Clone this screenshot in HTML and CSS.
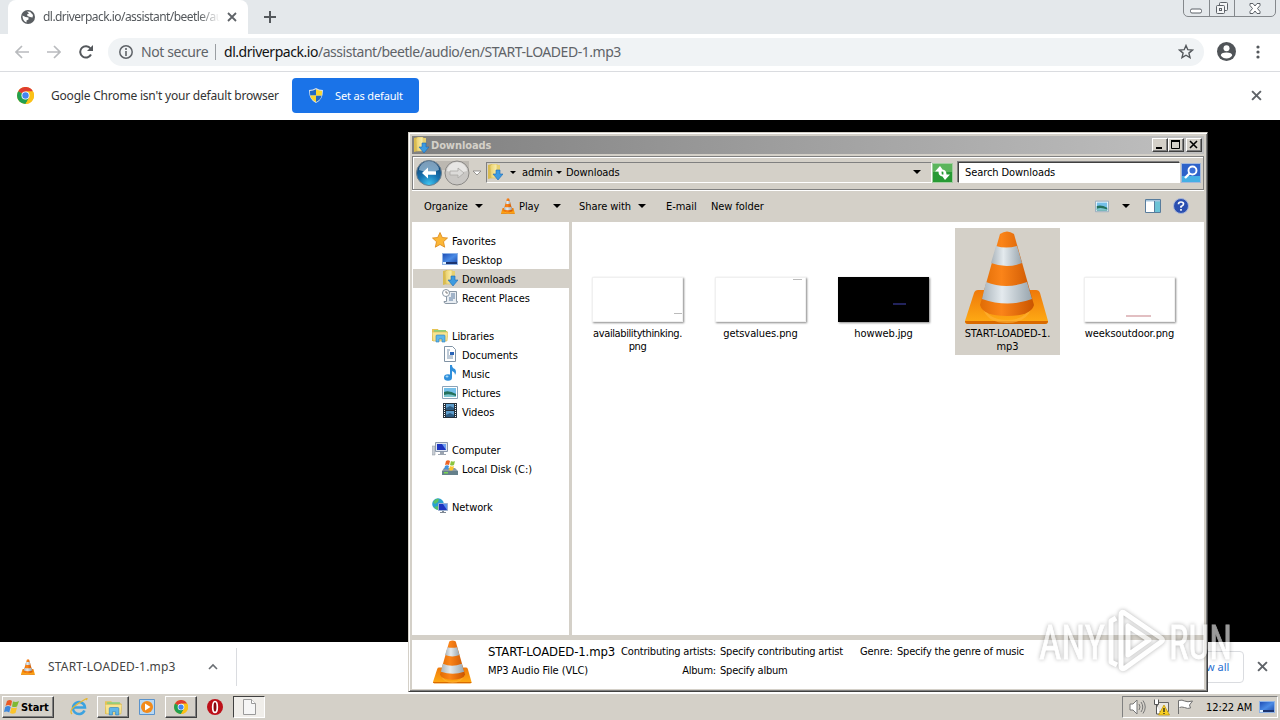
FILE: index.html
```html
<!DOCTYPE html>
<html lang="en">
<head>
    <meta charset="UTF-8">
    <meta name="viewport" content="width=device-width, initial-scale=1.0">
    <title>Desktop</title>
    <link rel="stylesheet" href="styles.css">
</head>
<body>
    <!-- Shared icons -->
    <svg width="0" height="0" class="defs">
        <defs>
            <linearGradient id="coneOrange">
                <stop offset="0" stop-color="#e06c05"/>
                <stop offset="0.4" stop-color="#fb8419"/>
                <stop offset="1" stop-color="#c95400"/>
            </linearGradient>
            <linearGradient id="coneWhite">
                <stop offset="0" stop-color="#a9b3ba"/>
                <stop offset="0.4" stop-color="#e4eaee"/>
                <stop offset="1" stop-color="#98a5ae"/>
            </linearGradient>
            <linearGradient id="coneBase" x2="0" y2="1">
                <stop offset="0" stop-color="#ee780a"/>
                <stop offset="1" stop-color="#ffad14"/>
            </linearGradient>
            <linearGradient id="blueScreen" x2="1" y2="1">
                <stop offset="0" stop-color="#1f4fb6"/>
                <stop offset="0.5" stop-color="#4a8be6"/>
                <stop offset="1" stop-color="#1d48a8"/>
            </linearGradient>
            <linearGradient id="folderYellow" x2="1" y2="0">
                <stop offset="0" stop-color="#e9cf6b"/>
                <stop offset="1" stop-color="#fbf0b0"/>
            </linearGradient>
            <radialGradient id="backBlue" cx="0.5" cy="0.95" r="0.9">
                <stop offset="0" stop-color="#3ec4f0"/>
                <stop offset="0.5" stop-color="#1670ae"/>
                <stop offset="1" stop-color="#14406c"/>
            </radialGradient>
        </defs>
        <symbol id="cone" viewBox="0 0 84 94">
            <path d="M13 59h58q3 0 4 3l8 28q0 3-3 3H3q-3 0-3-3l9-28q1-3 4-3z" fill="url(#coneBase)"/>
            <path d="M0 90q0 3 3 3h77q3 0 3-3z" fill="#d96a00"/>
            <path d="M18 73q4 16 24 16t24-16v5q-5 14-24 14T18 78z" fill="#ffb43a" opacity=".6"/>
            <path d="M35 3q7-5 14 0l20 71q-3 11-27 11T15 74z" fill="url(#coneOrange)"/>
            <path d="M31 15q10 3 21 0l5 17q-15 6-31 0z" fill="url(#coneWhite)"/>
            <path d="M21 51q20 8 41 0l5 17q-24 9-50 0z" fill="url(#coneWhite)"/>
        </symbol>
        <symbol id="downloads" viewBox="0 0 16 16">
            <path d="M1 1l4-1v14l-4 1z" fill="#d9bb50"/>
            <path d="M3 2l2-2h5v14H4z" fill="url(#folderYellow)" stroke="#d8be5c" stroke-width=".6"/>
            <path d="M10 1h3v12h-3z" fill="#e8d070"/>
            <path d="M9 6h4v4h3l-5 6-5-6h3z" fill="#3d9be0" stroke="#1b69b5" stroke-width=".6"/>
        </symbol>
        <symbol id="monitor" viewBox="0 0 16 16">
            <path d="M0 2h16v12H0z" fill="#8fb3e6"/>
            <path d="M1 3h14v10H1z" fill="url(#blueScreen)"/>
            <path d="M1 11h14v2H1z" fill="#1b3470"/>
            <path d="M1 11h3v2H1z" fill="#dff0ff"/>
        </symbol>
        <symbol id="libraries" viewBox="0 0 16 16">
            <path d="M0 2h6l1 2h8v10H0z" fill="#e5c454"/>
            <path d="M2 3h12v4H2z" fill="#8fcf7a"/>
            <path d="M0 5h16l-1 9H1z" fill="#f8e490" stroke="#d6b550" stroke-width=".6"/>
            <path d="M4 15V9q0-1 1-1h7q1 0 1 1v6h-3v-3H7v3z" fill="#5fb6e8" stroke="#2c80bd" stroke-width=".6"/>
        </symbol>
        <symbol id="picture" viewBox="0 0 16 16">
            <path d="M.5 2.500h15v12H.5z" fill="#fff" stroke="#8ba3b8"/>
            <path d="M2 4h12v9H2z" fill="#73bfe9"/>
            <path d="M2 8q5-2 12 2v3H2z" fill="#23705b"/>
            <path d="M2 11q5-2 12 1v1H2z" fill="#7bc4ce"/>
        </symbol>
        <symbol id="chrome" viewBox="0 0 16 16">
            <circle cx="8" cy="8" r="8" fill="#fbc116"/>
            <path d="M8 8L1.100 4A8 8 0 0 1 15 4H8z" fill="#df3d30"/>
            <path d="M8 8L1.100 4A8 8 0 0 0 8 16l3.500-6z" fill="#21a050"/>
            <path d="M8 8L15 4a8 8 0 0 1-7 12l3.500-6z" fill="#fbc116"/>
            <circle cx="8" cy="8" r="3.800" fill="#fff"/>
            <circle cx="8" cy="8" r="3" fill="#4385f0"/>
        </symbol>
        <symbol id="close" viewBox="0 0 10 10">
            <path d="M1 1l8 8M9 1L1 9" stroke="#5f6368" stroke-width="1.800"/>
        </symbol>
        <symbol id="arrow" viewBox="0 0 8 4">
            <path d="M0 0h8L4 4z"/>
        </symbol>
    </svg>

    <div class="browser">
        <div class="tabstrip">
            <div class="tab">
                <svg class="globe" width="14" height="14" viewBox="0 0 14 14">
                    <circle cx="7" cy="7" r="7" fill="#5a5e62"/>
                    <path d="M1.500 5.500l3 1.500 3 .5v2l-2 1v2Q1.500 11 1.500 5.500zM6 1.500l3 .2 3 3.300-.5 2.500L9 7 6.500 6 6 4.500 8 3.500z" fill="#fff"/>
                </svg>
                <span class="tab-title">dl.driverpack.io/assistant/beetle/audio</span>
                <svg width="10" height="10"><use href="#close"/></svg>
            </div>
            <svg class="new-tab" width="12" height="12" viewBox="0 0 12 12"><path d="M6 0v12M0 6h12" stroke="#54585c" stroke-width="2"/></svg>
            <div class="caption">
                <span><svg width="13" height="6" viewBox="0 0 13 6"><rect x=".5" y="1" width="11" height="4" rx="1.500" fill="#fff" stroke="#5d6268"/></svg></span>
                <span><svg width="14" height="14" viewBox="0 0 14 14" fill="#f4f5f6" stroke="#5d6268"><rect x="4.500" y="1.500" width="8" height="8" rx="1"/><rect x="1.500" y="4.500" width="8" height="8" rx="1"/><rect x="4.500" y="7.500" width="2" height="2"/></svg></span>
                <span><svg width="12" height="11" viewBox="0 0 12 11"><path d="M1 .5h3l2 2.500 2-2.500h3v2L8.500 5.500 11 8.500v2H8L6 8l-2 2.500H1v-2l2.500-3L1 2.500z" fill="#fff" stroke="#5d6268"/></svg></span>
            </div>
        </div>

        <div class="toolbar">
            <svg width="14" height="14" viewBox="0 0 14 14" fill="none" stroke="#b9bbbe" stroke-width="1.700"><path d="M14 7H1M7 1L1 7l6 6"/></svg>
            <svg width="14" height="14" viewBox="0 0 14 14" fill="none" stroke="#b9bbbe" stroke-width="1.700"><path d="M0 7h13M7 1l6 6-6 6"/></svg>
            <svg width="14" height="14" viewBox="0 0 14 14"><path d="M12 9.500A5.700 5.700 0 1 1 11.500 3.500" fill="none" stroke="#54585c" stroke-width="2"/><path d="M14 0v6H8z" fill="#54585c"/></svg>
            <div class="omnibox">
                <svg width="14" height="14" viewBox="0 0 14 14"><circle cx="7" cy="7" r="6.200" fill="none" stroke="#5f6368" stroke-width="1.500"/><path d="M7 3v2M7 6v5" stroke="#5f6368" stroke-width="1.600"/></svg>
                <span class="secure">Not secure</span>
                <span class="separator"></span>
                <span class="url"><b>dl.driverpack.io</b><span>/assistant/beetle/audio/en/START-LOADED-1.mp3</span></span>
                <svg class="star" width="16" height="15" viewBox="0 0 16 15"><path d="M8 1.500l1.800 4.200 4.600.4-3.500 3 1.100 4.500L8 11.200l-4 2.400 1.100-4.500-3.500-3 4.600-.4z" fill="none" stroke="#54585c" stroke-width="1.400"/></svg>
            </div>
            <svg class="avatar" width="19" height="19" viewBox="0 0 19 19"><circle cx="9.500" cy="9.500" r="9.500" fill="#505458"/><circle cx="9.500" cy="6.300" r="3" fill="#fff"/><path d="M3.800 13.500q0-3 5.700-3t5.700 3q-2 3-5.700 3t-5.700-3z" fill="#fff"/></svg>
            <svg class="more" width="4" height="14" viewBox="0 0 4 14" fill="#54585c"><circle cx="2" cy="2" r="1.600"/><circle cx="2" cy="7" r="1.600"/><circle cx="2" cy="12" r="1.600"/></svg>
        </div>

        <div class="infobar">
            <svg width="17" height="17"><use href="#chrome"/></svg>
            <span class="info-text">Google Chrome isn't your default browser</span>
            <button class="default-button">
                <svg width="14" height="15" viewBox="0 0 14 15"><path d="M7 0q3 2 7 2 0 10-7 13Q0 12 0 2q4 0 7-2z" fill="#d9e2ea"/><path d="M7 1.300V7.500H1.200Q1 5 1 3q3 0 6-1.700zM7 7.500h5.700Q11.500 12 7 14z" fill="#1f69c4"/><path d="M7 1.300Q10 3 13 3q0 2-.3 4.500H7zM1.200 7.500H7V14Q2.500 12 1.200 7.500z" fill="#f8d62f"/></svg>
                <span>Set as default</span>
            </button>
            <svg class="info-close" width="11" height="11"><use href="#close"/></svg>
        </div>

        <div class="page"></div>

        <div class="shelf">
            <svg width="14" height="16"><use href="#cone"/></svg>
            <span class="shelf-name">START-LOADED-1.mp3</span>
            <svg width="10" height="7" viewBox="0 0 10 7"><path d="M1 6l4-4 4 4" fill="none" stroke="#6a6e73" stroke-width="1.600"/></svg>
            <span class="shelf-line"></span>
            <button class="show-all">Show all</button>
            <svg width="11" height="11"><use href="#close"/></svg>
        </div>
    </div>

    <div class="taskbar">
        <button class="start">
            <svg width="16" height="16" viewBox="0 0 16 16"><path d="M3 2q3-2 5 0L7 7Q4 5 1.500 7z" fill="#ea5a26"/><path d="M9 2.500q3 1 6-.5l-2 5.500q-3 1-5 0z" fill="#7fb935"/><path d="M1.200 8q3-2 5.500 0l-1.500 5.500Q3 12 0 13z" fill="#3f88dc"/><path d="M7.500 8.500q3 1 5.500 0L11.500 14q-3 1.500-5.500 0z" fill="#fbc42b"/></svg>
            <span>Start</span>
        </button>
        <span class="task ie"><svg width="18" height="18" viewBox="0 0 18 18"><path d="M14.500 12.500A6 6 0 1 1 15 9.500H4" fill="none" stroke="#3ba2e0" stroke-width="2.500"/><path d="M2 16Q-2 12 9 5t7-3" fill="none" stroke="#e6b733" stroke-width="1.300"/></svg></span>
        <span class="task raised"><svg width="17" height="17"><use href="#libraries"/></svg></span>
        <span class="task"><svg width="16" height="16" viewBox="0 0 16 16"><path d="M.5.500h15v15H.5z" fill="#b8d8f3" stroke="#5a93cc"/><circle cx="8" cy="8" r="6" fill="#f28a1a"/><path d="M6 4.500v7L11.500 8z" fill="#fff"/></svg></span>
        <span class="task raised"><svg width="14" height="14"><use href="#chrome"/></svg></span>
        <span class="task"><svg width="16" height="16" viewBox="0 0 16 16"><circle cx="8" cy="8" r="8" fill="#bd1019"/><ellipse cx="8" cy="8" rx="2.300" ry="5.500" fill="#8a0810" stroke="#fff" stroke-width="1.700"/></svg></span>
        <span class="task pressed"><svg width="13" height="16" viewBox="0 0 13 16"><path d="M.5.500h8l4 4v11H.5z" fill="#f6f6f6" stroke="#9a9a9a"/><path d="M8.500.500v4h4" fill="#fff" stroke="#9a9a9a"/></svg></span>
        <div class="tray">
            <svg width="17" height="16" viewBox="0 0 17 16"><path d="M1 5h3l4-4v14l-4-4H1z" fill="#fff" stroke="#777"/><path d="M10 5q2 3 0 6M12 3q3.500 5 0 10M14 1.500q4.500 6.500 0 13" fill="none" stroke="#777"/></svg>
            <svg width="17" height="17" viewBox="0 0 17 17"><path d="M4.500 3.500h11v9h-11z" fill="#e9e6df" stroke="#666"/><path d="M1.500.5v5h4v-5M3.500 5v10h4" fill="#fff" stroke="#555"/><path d="M11 6l5.500 10h-11z" fill="#f8cf23" stroke="#bb8f00" stroke-width=".7"/><path d="M11 9v4M11 14v1" stroke="#222" stroke-width="1.300"/></svg>
            <svg width="17" height="16" viewBox="0 0 17 16"><path d="M1.500 15V1.500q4-1 6 .5 3 1.500 8 0l-3 4 1 3q-3 1-6-.5-3-1-5 0" fill="#fff" stroke="#707070"/></svg>
            <span class="clock">12:22 AM</span>
            <svg width="16" height="16"><use href="#monitor"/></svg>
        </div>
    </div>

    <div class="window">
        <div class="titlebar">
            <svg width="16" height="16"><use href="#downloads"/></svg>
            <span class="window-title">Downloads</span>
            <span class="win-button"><svg width="14" height="12" viewBox="0 0 14 12"><path d="M3 8h6v2H3z"/></svg></span>
            <span class="win-button"><svg width="14" height="12" viewBox="0 0 14 12"><path d="M2.500 2v7.500h8V2z" fill="none" stroke="#000"/><path d="M2 1h9v2H2z"/></svg></span>
            <span class="win-button last"><svg width="14" height="12" viewBox="0 0 14 12"><path d="M3 2l7 7M10 2L3 9" stroke="#000" stroke-width="1.600"/></svg></span>
        </div>

        <div class="address-bar">
            <svg class="nav" width="66" height="26" viewBox="0 0 66 26">
                <path d="M13 1h40v9H13z" fill="#bcb8b1"/>
                <circle cx="13" cy="13" r="12.500" fill="url(#backBlue)" stroke="#6d7f8d"/>
                <path d="M3 10a10 9 0 0 1 20 0q-10 4-20 0z" fill="#a6c3d9" opacity=".7"/>
                <path d="M6 13l6-5.500v3.700h8v3.600h-8v3.700z" fill="#fff"/>
                <circle cx="41" cy="13" r="12" fill="#c9c7c4" stroke="#8b8986"/>
                <path d="M31 11a10 9 0 0 1 20 0q-10 3-20 0z" fill="#e7e6e4"/>
                <path d="M48 13l-6-5v3h-8v4h8v3z" fill="#dcdbd9" stroke="#aaa8a5" stroke-width=".8"/>
                <path d="M57 11h8l-4 4z" fill="#fff" stroke="#84817d" stroke-width=".8"/>
            </svg>
            <div class="path">
                <svg width="16" height="16"><use href="#downloads"/></svg>
                <svg class="crumb first" width="6" height="3"><use href="#arrow"/></svg>
                <span class="admin">admin</span>
                <svg class="crumb" width="6" height="3"><use href="#arrow"/></svg>
                <span class="crumb-name">Downloads</span>
                <svg class="path-menu" width="8" height="4"><use href="#arrow"/></svg>
            </div>
            <svg class="refresh" width="21" height="20" viewBox="0 0 21 20"><path d="M.5.500h20v19H.5z" fill="#279a34" stroke="#a3cfa1"/><path d="M1 1h19v8H1z" fill="#5cb55c"/><path d="M8 3L3 8.500h3.500q0 4.500 4 5-1-2-1-5H12zM13 17l5-5.500h-3.500q0-4.500-4-5 1 2 1 5H9z" fill="#fff"/></svg>
            <div class="search">Search Downloads</div>
            <svg class="search-go" width="20" height="20" viewBox="0 0 20 20"><path d="M.5.500h19v19H.5z" fill="#2d62c9" stroke="#a3b8db"/><path d="M1 13h18v6H1z" fill="#45afe4"/><circle cx="11.500" cy="7.500" r="4" fill="#3a6fd6" stroke="#fff" stroke-width="1.900"/><path d="M8.500 10.500L4 15" stroke="#fff" stroke-width="2.400"/></svg>
        </div>

        <div class="command-bar">
            <span class="organize">Organize</span>
            <svg class="drop" width="8" height="4"><use href="#arrow"/></svg>
            <svg class="play-icon" width="14" height="16"><use href="#cone"/></svg>
            <span class="play">Play</span>
            <svg class="drop play-drop" width="8" height="4"><use href="#arrow"/></svg>
            <span class="share">Share with</span>
            <svg class="drop" width="8" height="4"><use href="#arrow"/></svg>
            <span class="email">E-mail</span>
            <span class="new-folder">New folder</span>
            <svg class="view" width="14" height="14"><use href="#picture"/></svg>
            <svg class="view-drop" width="8" height="4"><use href="#arrow"/></svg>
            <svg class="pane" width="16" height="14" viewBox="0 0 16 14"><path d="M.5.500h15v13H.5z" fill="#fff" stroke="#587c9c"/><path d="M10 2h5v11h-5z" fill="#6cc3d6"/><path d="M1 1h14v1.500H1z" fill="#a6c5dc"/><path d="M9.500 2v11" stroke="#587c9c"/></svg>
            <svg width="16" height="16" viewBox="0 0 16 16"><circle cx="8" cy="8" r="7.500" fill="#2b4fb0" stroke="#a8b6d8"/><path d="M5.500 6.200Q5.500 4 8 4t2.500 2Q10.500 7.500 8 8.500v1.300M8 11v1.800" fill="none" stroke="#fff" stroke-width="1.700"/></svg>
        </div>

        <div class="explorer">
            <div class="sidebar">
                <div class="row">
                    <svg width="16" height="16" viewBox="0 0 16 16"><path d="M8 .5l2.300 5 5.200.5-4 3.700 1.200 5.500L8 12.500l-4.700 2.700 1.200-5.500L.5 6l5.200-.5z" fill="#fcb737" stroke="#d98718" stroke-width=".8"/></svg>
                    <span>Favorites</span>
                </div>
                <div class="row child"><svg width="16" height="16"><use href="#monitor"/></svg><span>Desktop</span></div>
                <div class="row child selected"><svg width="16" height="16"><use href="#downloads"/></svg><span>Downloads</span></div>
                <div class="row child">
                    <svg width="16" height="16" viewBox="0 0 16 16"><path d="M4.500 2.500h10v10h1q0 2-2 2H4q-2 0-2-2h2.500z" fill="#e9eef3" stroke="#8b98a5"/><path d="M9 5h4M9 7h4M7 9h6M7 11h4" stroke="#5a7ba0"/><circle cx="4" cy="4" r="3.500" fill="#fff" stroke="#8b98a5"/><path d="M4 2v2h2" fill="none" stroke="#666" stroke-width=".8"/></svg>
                    <span>Recent Places</span>
                </div>
                <div class="row gap"><svg width="16" height="16"><use href="#libraries"/></svg><span>Libraries</span></div>
                <div class="row child">
                    <svg width="16" height="16" viewBox="0 0 16 16"><path d="M2.500.500h8l3 3v12h-11z" fill="#fff" stroke="#8093a5"/><path d="M5 4h3M5 6h2M5 8h2M5 10h6M5 12h6" stroke="#7d96b0"/><path d="M8 6h4v3H8z" fill="#2b65b8"/></svg>
                    <span>Documents</span>
                </div>
                <div class="row child">
                    <svg width="16" height="16" viewBox="0 0 16 16"><path d="M8 0h2q0 3 3 4 2 3 0 6 0-3-3-4v6H8z" fill="#2f8fdb"/><ellipse cx="6" cy="12.500" rx="4" ry="3.300" fill="#2f8fdb"/><ellipse cx="5" cy="11.500" rx="1.500" ry="1" fill="#a5d8f8"/></svg>
                    <span>Music</span>
                </div>
                <div class="row child"><svg width="16" height="16"><use href="#picture"/></svg><span>Pictures</span></div>
                <div class="row child">
                    <svg width="16" height="16" viewBox="0 0 16 16"><path d="M1 0h14v15H1z" fill="#26323d"/><path d="M4 1h8v6H4zM4 8h8v6H4z" fill="#5d9dcc"/><path d="M4 5l4-2 4 2v2H4zM4 12l4-2 4 2v2H4z" fill="#2c5a80"/><path d="M2.500 1v14M13.500 1v14" stroke="#fff" stroke-dasharray="1 1"/></svg>
                    <span>Videos</span>
                </div>
                <div class="row gap">
                    <svg width="16" height="16" viewBox="0 0 16 16"><path d="M0 5h3v9H0z" fill="#c9ced5" stroke="#8e959d" stroke-width=".5"/><path d="M3.500 1.500h12v9h-12z" fill="#dfe6ef" stroke="#8b98ac"/><path d="M5 3h9v6H5z" fill="#1d34c0"/><path d="M10 3h4v6z" fill="#6fa0f0"/><path d="M6 13h8v1H6zM8 11h4v2H8z" fill="#9ba4b0"/></svg>
                    <span>Computer</span>
                </div>
                <div class="row child">
                    <svg width="16" height="16" viewBox="0 0 16 16"><path d="M2 8h11l3 3v4H0v-4z" fill="#8d9ba5"/><path d="M0 11h16v4H0z" fill="#65808b"/><path d="M2 12h4v1.500H2z" fill="#79d653"/><path d="M4 1q2-1.500 4 0L7 5Q5 4 3 5z" fill="#ec6424"/><path d="M9 1q2 1 4 0l-1 4q-2 1-4 0z" fill="#8bc53f"/><path d="M3 6q2-1.500 4 0L6 9.500q-2-1-4 0z" fill="#4393dc"/><path d="M8 6q2 1 4 0l-1 4q-2 1-4 0z" fill="#fcc42c"/></svg>
                    <span>Local Disk (C:)</span>
                </div>
                <div class="row gap">
                    <svg width="16" height="16" viewBox="0 0 16 16"><circle cx="6" cy="6" r="5.800" fill="#2a9fd0"/><path d="M1 4q3-4 6-3L6 4 3 6zM2 9l4-1 1 3-2 1z" fill="#58c264"/><path d="M6.500 5.500h9v7h-9z" fill="#1d34c0" stroke="#9cb0d0"/><path d="M11 6h4v6z" fill="#5b8fee"/><path d="M8 14h6v1H8zM10 13h2v1h-2z" fill="#7e8894"/></svg>
                    <span>Network</span>
                </div>
            </div>
            <div class="files">
                <div class="file">
                    <div class="preview"><div class="thumb"><i class="mark one"></i></div></div>
                    <span class="long-name">availabilitythinking.<br>png</span>
                </div>
                <div class="file">
                    <div class="preview"><div class="thumb"><i class="mark two"></i></div></div>
                    <span>getsvalues.png</span>
                </div>
                <div class="file">
                    <div class="preview"><div class="thumb dark"><i class="mark three"></i></div></div>
                    <span>howweb.jpg</span>
                </div>
                <div class="file selected">
                    <div class="preview"><svg width="84" height="94"><use href="#cone"/></svg></div>
                    <span>START-LOADED-1.<br>mp3</span>
                </div>
                <div class="file">
                    <div class="preview"><div class="thumb"><i class="mark four"></i></div></div>
                    <span>weeksoutdoor.png</span>
                </div>
            </div>
        </div>

        <div class="details">
            <svg width="39" height="44"><use href="#cone"/></svg>
            <div class="detail-name">
                <div class="big">START-LOADED-1.mp3</div>
                <div>MP3 Audio File (VLC)</div>
            </div>
            <div class="detail-label">
                <div>Contributing artists:</div>
                <div>Album:</div>
            </div>
            <div class="detail-value">
                <div>Specify contributing artist</div>
                <div>Specify album</div>
            </div>
            <div class="detail-genre">Genre:</div>
            <div class="detail-genre-value">Specify the genre of music</div>
        </div>
    </div>

    <svg class="watermark" width="200" height="72" viewBox="0 0 200 72">
        <g class="mark-text">
            <text x="3" y="55" textLength="66" lengthAdjust="spacingAndGlyphs">ANY</text>
            <text x="133" y="55" textLength="63" lengthAdjust="spacingAndGlyphs">RUN</text>
        </g>
        <g class="mark-shape">
            <path d="M87 8l38 26q3 2 0 4L89 64q-4 2-4-2V11q0-4 3-2"/>
            <path d="M92 22v29l21-15z"/>
            <path d="M80 14l-5 3v41l6 3"/>
        </g>
    </svg>
</body>
</html>
```

FILE: styles.css
```css
* {
    box-sizing: border-box;
}
body {
    margin: 0;
    width: 1280px;
    height: 720px;
    overflow: hidden;
    position: relative;
    display: flex;
    flex-direction: column;
    background: #000;
    color: #000;
    font-family: "DejaVu Sans Condensed", "DejaVu Sans", sans-serif;
    font-stretch: condensed;
    font-size: 11px;
    line-height: 13px;
    white-space: nowrap;
}
svg {
    display: block;
    flex: none;
}
.defs {
    position: absolute;
}
button {
    font: inherit;
    padding: 0;
}

/* Browser */
.browser {
    height: 693px;
    display: flex;
    flex-direction: column;
    font-family: "Noto Sans", sans-serif;
    font-stretch: normal;
}
.tabstrip {
    height: 34px;
    background: #e4e8eb;
    display: flex;
    align-items: center;
}
.tab {
    width: 240px;
    height: 34px;
    margin-left: 8px;
    padding: 0 11px 0 13px;
    background: #fff;
    border-radius: 8px 8px 0 0;
    display: flex;
    align-items: center;
}
.tab-title {
    width: 177px;
    margin: 0 7px 0 8px;
    overflow: hidden;
    font-size: 12px;
    letter-spacing: -0.55px;
    color: #54585c;
    line-height: 16px;
    -webkit-mask-image: linear-gradient(90deg, #000 88%, transparent);
}
.new-tab {
    margin-left: 16px;
}
.caption {
    display: flex;
    align-self: flex-start;
    margin: -1px 4px 0 auto;
    border: 1px solid #84888c;
    border-radius: 0 0 5px 5px;
    height: 18px;
}
.caption span {
    width: 25px;
    display: flex;
    align-items: center;
    justify-content: center;
}
.caption span + span {
    border-left: 1px solid #84888c;
}
.caption span:first-child {
    align-items: flex-end;
    padding-bottom: 2px;
}
.caption span:last-child {
    width: 41px;
}
.toolbar {
    height: 38px;
    padding: 0 20px 2px 15px;
    background: #fff;
    border-bottom: 1px solid #dadce0;
    display: flex;
    align-items: center;
    gap: 18px;
}
.omnibox {
    width: 1096px;
    height: 28px;
    margin-left: -3px;
    padding: 0 10px 0 11px;
    border-radius: 14px;
    background: #f0f3f5;
    display: flex;
    align-items: center;
    font-size: 14px;
    line-height: 18px;
    color: #5f6368;
}
.secure {
    margin-left: 8px;
    width: 67px;
    letter-spacing: -0.4px;
}
.separator {
    width: 1px;
    height: 16px;
    margin: 0 8px 0 7px;
    background: #9a9ea2;
}
.url {
    letter-spacing: -0.46px;
}
.url b {
    font-weight: normal;
    color: #111;
}
.star {
    margin-left: auto;
}
.avatar {
    margin-left: -5px;
}
.more {
    margin-left: 2px;
}
.infobar {
    height: 48px;
    padding: 0 18px 1px 17px;
    background: #fff;
    display: flex;
    align-items: center;
}
.info-text {
    margin-left: 17px;
    width: 228px;
    font-size: 12px;
    letter-spacing: -0.2px;
    color: #333;
}
.default-button {
    width: 127px;
    height: 35px;
    margin-left: 13px;
    padding-left: 17px;
    border: 0;
    border-radius: 4px;
    background: #1a73e8;
    color: #fff;
    letter-spacing: -0.15px;
    display: flex;
    align-items: center;
    gap: 12px;
}
.info-close {
    margin-left: auto;
}
.page {
    flex: 1;
    background: #000;
}
.shelf {
    height: 51px;
    padding: 0 12px 2px 21px;
    background: #fff;
    display: flex;
    align-items: center;
}
.shelf-name {
    width: 160px;
    margin-left: 13px;
    font-size: 12px;
    letter-spacing: 0.2px;
    color: #444;
}
.shelf-line {
    width: 1px;
    height: 38px;
    margin-left: 18px;
    background: #dadce0;
}
.show-all {
    width: 72px;
    height: 32px;
    margin: 0 13px 0 auto;
    border: 1px solid #dadce0;
    border-radius: 4px;
    background: #fff;
    color: #2a6fd0;
}

/* Taskbar */
.taskbar {
    height: 27px;
    padding: 2px 2px 0 2px;
    border-top: 1px solid #fff;
    background: #d4d0c8;
    display: flex;
}
.start,
.task.raised {
    border: 1px solid;
    border-color: #fff #404040 #404040 #fff;
    box-shadow: inset -1px -1px 0 #808080;
    background: #d4d0c8;
}
.start {
    width: 52px;
    height: 22px;
    display: flex;
    align-items: center;
    gap: 1px;
    font-weight: bold;
    letter-spacing: -0.1px;
    padding-left: 1px;
}
.task {
    width: 32px;
    height: 22px;
    margin-left: 2px;
    display: flex;
    align-items: center;
    justify-content: center;
}
.task.ie {
    margin-left: 9px;
}
.task.pressed {
    border: 1px solid;
    border-color: #404040 #fff #fff #404040;
    background: #f0eeea;
}
.tray {
    width: 156px;
    height: 22px;
    margin-left: auto;
    padding: 0 2px 0 6px;
    border: 1px solid;
    border-color: #808080 #fff #fff #808080;
    display: flex;
    align-items: center;
    gap: 7px;
}
.clock {
    width: 47px;
    margin-left: 5px;
    letter-spacing: -0.1px;
}

/* Explorer window */
.window {
    position: absolute;
    left: 408px;
    top: 132px;
    width: 800px;
    height: 560px;
    padding: 2px;
    border: 1px solid;
    border-color: #d4d0c8 #404040 #404040 #d4d0c8;
    box-shadow: inset 1px 1px 0 #fff, inset -1px -1px 0 #808080;
    background: #d4d0c8;
    letter-spacing: -0.08px;
    display: flex;
    flex-direction: column;
}
.titlebar {
    height: 18px;
    margin: 1px 1px 2px;
    padding: 0 2px 0 1px;
    background: linear-gradient(90deg, #808080, #c0c0c0);
    display: flex;
    align-items: center;
}
.window-title {
    margin: 0 auto 0 2px;
    padding-top: 1px;
    color: #d4d0c8;
    font-weight: bold;
}
.win-button {
    width: 16px;
    height: 14px;
    border: 1px solid;
    border-color: #fff #404040 #404040 #fff;
    box-shadow: inset -1px -1px 0 #808080;
    background: #d4d0c8;
}
.win-button.last {
    margin-left: 2px;
}
.address-bar {
    height: 34px;
    margin: 0 1px;
    padding: 0 2px 0 3px;
    border: 1px solid #808080;
    box-shadow: inset 1px 1px 0 #fff, 0 1px 0 #fff;
    display: flex;
    align-items: center;
}
.path {
    flex: 1;
    height: 21px;
    margin: -1px 0 0 4px;
    border: 1px solid;
    border-color: #808080 #fff #fff #808080;
    display: flex;
    align-items: center;
}
.crumb {
    margin: 0 4px 0 6px;
}
.crumb.first {
    margin-left: 7px;
    margin-right: 6px;
}
.admin {
    width: 28px;
}
.path-menu {
    margin: 0 10px 0 auto;
}
.search {
    width: 222px;
    height: 21px;
    margin: -1px 1px 0 5px;
    padding: 3px 6px;
    border: 1px solid;
    border-color: #404040 #fff #fff #404040;
    box-shadow: -1px -1px 0 #808080;
    background: #fff;
}
.command-bar {
    height: 31px;
    margin-top: 1px;
    padding: 0 16px 0 13px;
    display: flex;
    align-items: center;
}
.drop {
    margin-left: 7px;
}
.organize {
    width: 44px;
}
.play-icon {
    margin: 0 4px 0 18px;
}
.play {
    width: 20px;
}
.play-drop {
    margin-left: 14px;
}
.share {
    width: 52px;
    margin-left: 18px;
}
.email {
    width: 29px;
    margin-left: 20px;
}
.new-folder {
    margin-left: 16px;
}
.view {
    margin-left: auto;
}
.view-drop {
    margin: 0 15px 0 13px;
}
.pane {
    margin-right: 12px;
}
.explorer {
    height: 414px;
    margin: 0 1px;
    display: flex;
    background: #fff;
}
.sidebar {
    width: 160px;
    padding-top: 9px;
    padding-left: 1px;
    border-right: 3px solid #d4d0c8;
}
.row {
    height: 19px;
    padding-left: 19px;
    display: flex;
    align-items: center;
    gap: 4px;
}
.row span {
    padding-top: 2px;
}
.row.child {
    padding-left: 29px;
}
.row.gap {
    margin-top: 19px;
}
.selected {
    background: #d4d0c8;
}
.files {
    padding: 6px 13px;
    display: flex;
    align-items: flex-start;
    gap: 18px;
}
.file {
    width: 105px;
    height: 127px;
    text-align: center;
}
.file.selected {
    margin: 0 -1px 0 1px;
}
.long-name {
    letter-spacing: -0.4px;
}
.preview {
    height: 99px;
    padding: 0 1px 5px 0;
    display: flex;
    align-items: flex-end;
    justify-content: center;
}
.file.selected .preview {
    padding-bottom: 2px;
}
.thumb {
    width: 91px;
    height: 45px;
    background: #fff;
    border: 1px solid #f0f0f0;
    box-shadow: 1px 1px 2px #888;
    overflow: hidden;
}
.thumb.dark {
    background: #000;
    border-color: #000;
}
.mark {
    display: block;
    height: 1px;
    background: #bbb;
}
.mark.one {
    width: 8px;
    margin: 35px 0 0 81px;
}
.mark.two {
    width: 9px;
    margin: 1px 0 0 77px;
}
.mark.three {
    width: 13px;
    height: 2px;
    margin: 25px 0 0 54px;
    background: #22235c;
}
.mark.four {
    width: 25px;
    height: 2px;
    margin: 37px 0 0 41px;
    background: #e2bfc2;
}
.details {
    height: 49px;
    margin: 5px 1px 0;
    padding-left: 21px;
    background: #fff;
    display: flex;
    line-height: 19px;
}
.details > div {
    padding-top: 2px;
}
.detail-name {
    width: 129px;
    margin-left: 16px;
}
.detail-name .big {
    font-size: 13px;
    letter-spacing: -0.1px;
}
.detail-label {
    width: 99px;
    text-align: right;
    letter-spacing: -0.2px;
}
.detail-value {
    width: 140px;
    margin-left: 4px;
    letter-spacing: -0.2px;
}
.detail-genre {
    width: 37px;
}
.detail-genre-value {
    letter-spacing: -0.2px;
}

/* Watermark */
.watermark {
    position: absolute;
    left: 1036px;
    top: 604px;
    opacity: 0.6;
    filter: drop-shadow(0 0 2px rgba(0, 0, 0, 0.5));
}
.mark-text {
    font-family: Roboto, sans-serif;
    font-size: 49px;
    fill: #fff;
    stroke: #fff;
    stroke-width: 0.8;
}
.mark-shape {
    fill: none;
    stroke: #fff;
    stroke-width: 5;
    stroke-linejoin: round;
}
```
